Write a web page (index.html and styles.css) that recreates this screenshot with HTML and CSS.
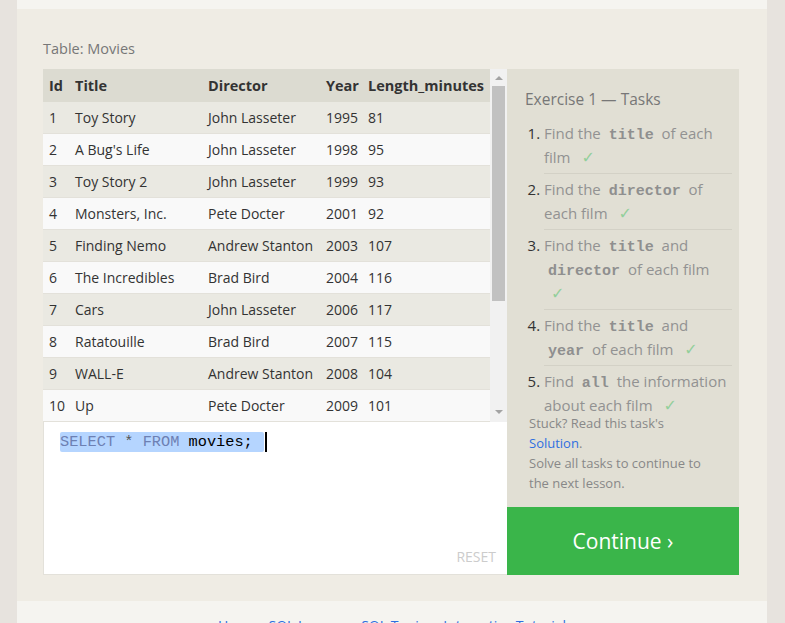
FILE: index.html
```html
<!DOCTYPE html>
<html lang="en">
<head>
<meta charset="utf-8">
<title>SQL Lesson 1</title>
<link rel="stylesheet" href="styles.css">
</head>
<body>
<div class="page">
  <div class="topband"></div>
  <main class="lesson">
    <div class="caption">Table: Movies</div>
    <div class="workspace">
      <div class="left">
        <div class="tablebox">
          <table class="results">
            <colgroup>
              <col class="c-id"><col class="c-title"><col class="c-dir"><col class="c-year"><col class="c-len">
            </colgroup>
            <thead>
              <tr><th>Id</th><th>Title</th><th>Director</th><th>Year</th><th>Length_minutes</th></tr>
            </thead>
            <tbody>
              <tr><td>1</td><td>Toy Story</td><td>John Lasseter</td><td>1995</td><td>81</td></tr>
              <tr><td>2</td><td>A Bug's Life</td><td>John Lasseter</td><td>1998</td><td>95</td></tr>
              <tr><td>3</td><td>Toy Story 2</td><td>John Lasseter</td><td>1999</td><td>93</td></tr>
              <tr><td>4</td><td>Monsters, Inc.</td><td>Pete Docter</td><td>2001</td><td>92</td></tr>
              <tr><td>5</td><td>Finding Nemo</td><td>Andrew Stanton</td><td>2003</td><td>107</td></tr>
              <tr><td>6</td><td>The Incredibles</td><td>Brad Bird</td><td>2004</td><td>116</td></tr>
              <tr><td>7</td><td>Cars</td><td>John Lasseter</td><td>2006</td><td>117</td></tr>
              <tr><td>8</td><td>Ratatouille</td><td>Brad Bird</td><td>2007</td><td>115</td></tr>
              <tr><td>9</td><td>WALL-E</td><td>Andrew Stanton</td><td>2008</td><td>104</td></tr>
              <tr><td>10</td><td>Up</td><td>Pete Docter</td><td>2009</td><td>101</td></tr>
            </tbody>
          </table>
          <div class="scrollbar">
            <div class="arrow up"></div>
            <div class="thumb"></div>
            <div class="arrow down"></div>
          </div>
        </div>
        <div class="editor">
          <div class="code"><span class="sel"><span class="kw">SELECT</span> <span class="op">*</span> <span class="kw">FROM</span> movies;&nbsp;</span><span class="cursor"></span></div>
          <div class="reset">RESET</div>
        </div>
      </div>
      <div class="right">
        <div class="tasks">
          <h2>Exercise 1 — Tasks</h2>
          <ol>
            <li>Find the <code>title</code> of each film <span class="check">✓</span></li>
            <li>Find the <code>director</code> of each film <span class="check">✓</span></li>
            <li>Find the <code>title</code> and <code>director</code> of each film <span class="check">✓</span></li>
            <li>Find the <code>title</code> and <code>year</code> of each film <span class="check">✓</span></li>
            <li>Find <code>all</code> the information about each film <span class="check">✓</span></li>
          </ol>
          <div class="stuck">
            <p>Stuck? Read this task's <a href="#">Solution</a>.</p>
            <p>Solve all tasks to continue to the next lesson.</p>
          </div>
        </div>
        <button class="continue">Continue ›</button>
      </div>
    </div>
  </main>
  <footer class="footer">
    <a href="#">Home</a> · <a href="#">SQL Lessons</a> · <a href="#">SQL Topics</a> · <a href="#">Interactive Tutorial</a>
  </footer>
</div>
</body>
</html>
```
FILE: styles.css
```css
* { box-sizing: border-box; }
html, body { margin: 0; padding: 0; overflow: hidden; }
body {
  background: #e7e3de;
  font-family: "Open Sans", "Noto Sans", sans-serif;
  color: #333;
}
.page { width: 750px; margin-left: 17px; }
.topband { height: 9px; background: #f5f4f0; }
.lesson {
  background: #efece4;
  padding: 30px 28px 26px 26px;
}
.caption {
  font-size: 14.5px;
  line-height: 20px;
  color: #777;
  margin-bottom: 10px;
}
.workspace {
  display: grid;
  grid-template-columns: 464px 232px;
}
.left { display: flex; flex-direction: column; }
.tablebox {
  display: flex;
  height: 353px;
  background: #f9f9f9;
}
.results {
  width: 447px;
  table-layout: fixed;
  border-collapse: separate;
  border-spacing: 0;
  font-size: 14px;
  align-self: flex-start;
}
.c-id { width: 26px; }
.c-title { width: 133px; }
.c-dir { width: 118px; }
.c-year { width: 42px; }
.c-len { width: 128px; }
.results th {
  height: 33px;
  background: #dcdbd1;
  text-align: left;
  font-weight: 700;
  font-size: 14.5px;
  padding: 0 0 0 6px;
  line-height: 20px;
  white-space: nowrap;
}
.results td {
  height: 32px;
  padding: 0 0 0 6px;
  line-height: 20px;
  border-bottom: 1px solid #e3e1da;
  white-space: nowrap;
}
.results tbody tr:nth-child(odd) td { background: #eae9e2; }
.results tbody tr:nth-child(even) td { background: #f9f9f9; }
.scrollbar {
  width: 17px;
  height: 353px;
  background: #f1f1f1;
  display: flex;
  flex-direction: column;
  align-items: center;
}
.arrow {
  width: 0;
  height: 0;
  border-left: 4px solid transparent;
  border-right: 4px solid transparent;
}
.arrow.up { border-bottom: 4px solid #a3a3a3; margin-top: 7px; }
.thumb {
  width: 13px;
  height: 215px;
  margin-top: 6px;
  background: #c1c1c1;
}
.arrow.down { border-top: 4px solid #a3a3a3; margin-top: auto; margin-bottom: 8px; }
.editor {
  height: 153px;
  background: #fff;
  border-left: 1px solid #e3e1da;
  border-bottom: 1px solid #e3e1da;
  padding: 10px 11px 7px 16px;
  display: flex;
  flex-direction: column;
  justify-content: space-between;
}
.code {
  font-family: "Liberation Mono", "DejaVu Sans Mono", monospace;
  font-size: 15.3px;
  line-height: 20px;
  height: 20px;
  color: #000;
  display: flex;
}
.sel { background: #b5d5ff; border-radius: 2px; white-space: pre; padding-right: 2px; }
.kw { color: #6d80b3; }
.op { color: #555; }
.cursor { width: 2px; height: 20px; background: #000; margin-left: 1px; }
.reset {
  align-self: flex-end;
  font-size: 14px;
  line-height: 20px;
  color: #cccccc;
}
.right { display: flex; flex-direction: column; }
.tasks {
  height: 438px;
  background: #e1dfd4;
  padding: 19px 7px 0 18px;
}
.tasks h2 {
  font-size: 15.5px;
  font-weight: 400;
  line-height: 22px;
  color: #777;
  margin: 0 0 11px;
}
.tasks ol {
  margin: 0;
  padding-left: 19px;
  font-size: 15px;
  line-height: 24px;
  color: #929292;
}
.tasks li {
  padding-bottom: 4px;
  margin-bottom: 3px;
  border-bottom: 1px solid #d3d1c6;
}
.tasks li:last-child { padding-bottom: 0; margin-bottom: 0; border-bottom: none; }
.tasks li::marker { color: #333; }
.tasks code {
  font-family: "Liberation Mono", "DejaVu Sans Mono", monospace;
  font-weight: 700;
  font-size: 15px;
  line-height: 1;
  color: #8f8f8f;
  padding: 0 4px;
}
.check {
  color: #93cf9b;
  margin-left: 7px;
  font-family: "DejaVu Sans", sans-serif;
  font-size: 16px;
  line-height: 1;
}
.stuck {
  margin-top: -4px;
  padding-left: 4px;
  width: 190px;
  font-size: 13px;
  line-height: 20px;
  color: #888;
}
.stuck p { margin: 0; }
.stuck a { color: #2f6fe0; text-decoration: none; }
.continue {
  height: 68px;
  width: 100%;
  border: none;
  background: #3ab54a;
  color: #fff;
  font-family: "Open Sans", "Noto Sans", sans-serif;
  font-size: 21px;
  padding: 0;
}
.footer {
  background: #f5f4f0;
  padding: 15px 0 30px;
  text-align: center;
  font-size: 14px;
  line-height: 20px;
  color: #888;
}
.footer a { color: #2f6fe0; text-decoration: none; }
```
